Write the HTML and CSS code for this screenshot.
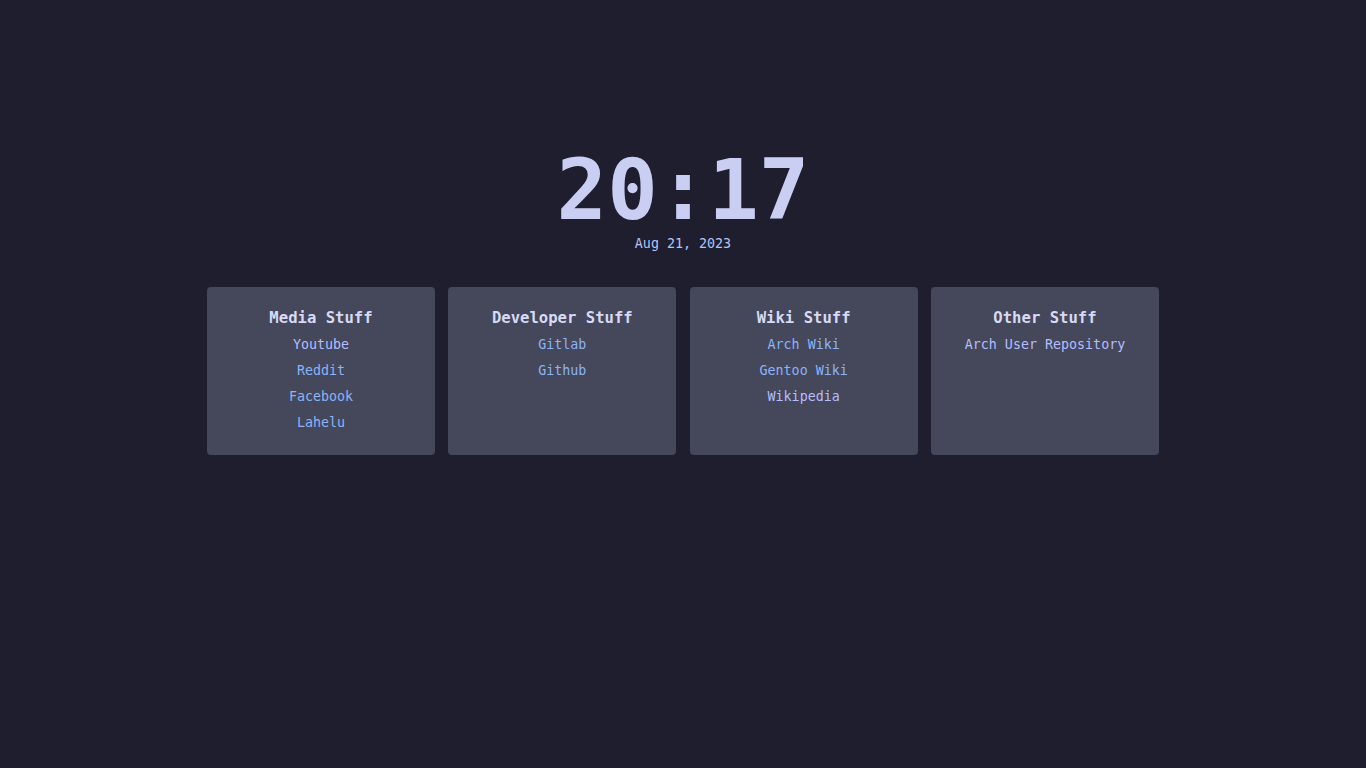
FILE: index.html
```html
<!DOCTYPE html>
<html lang="en">
<head>
<meta charset="utf-8">
<title>Startpage</title>
<link rel="stylesheet" href="styles.css">
</head>
<body>
<main class="page">
  <div class="clock">20:17</div>
  <div class="date">Aug 21, 2023</div>
  <section class="cards">
    <div class="card">
      <div class="card-title">Media Stuff</div>
      <a class="link visited" href="#">Youtube</a>
      <a class="link" href="#">Reddit</a>
      <a class="link" href="#">Facebook</a>
      <a class="link" href="#">Lahelu</a>
    </div>
    <div class="card">
      <div class="card-title">Developer Stuff</div>
      <a class="link" href="#">Gitlab</a>
      <a class="link" href="#">Github</a>
    </div>
    <div class="card">
      <div class="card-title">Wiki Stuff</div>
      <a class="link" href="#">Arch Wiki</a>
      <a class="link" href="#">Gentoo Wiki</a>
      <a class="link visited" href="#">Wikipedia</a>
    </div>
    <div class="card">
      <div class="card-title">Other Stuff</div>
      <a class="link visited" href="#">Arch User Repository</a>
    </div>
  </section>
</main>
</body>
</html>
```

FILE: styles.css
```css
html, body {
  margin: 0;
  padding: 0;
  background: #1e1e2e;
  height: 100%;
}
body {
  font-family: "DejaVu Sans Mono", monospace;
  color: #cdd6f4;
}
.page {
  display: flex;
  flex-direction: column;
  align-items: center;
  padding-top: 148px;
}
.clock {
  font-size: 84px;
  line-height: 84px;
  font-weight: bold;
  color: #c9cef2;
}
.date {
  margin-top: 4px;
  font-size: 13.33px;
  line-height: 16px;
  color: #b4c3f5;
}
.cards {
  margin-top: 35px;
  display: flex;
  gap: 13.33px;
}
.card {
  width: 228px;
  height: 168px;
  box-sizing: border-box;
  background: #45475a;
  border-radius: 4px;
  padding-top: 21px;
  display: flex;
  flex-direction: column;
  align-items: center;
}
.card-title {
  font-size: 15.6px;
  line-height: 20px;
  font-weight: bold;
  color: #d6daf5;
  margin-bottom: 4px;
}
.link {
  font-size: 13.33px;
  line-height: 26px;
  color: #89b4fa;
  text-decoration: none;
}
.link.visited {
  color: #b4befe;
}
```
